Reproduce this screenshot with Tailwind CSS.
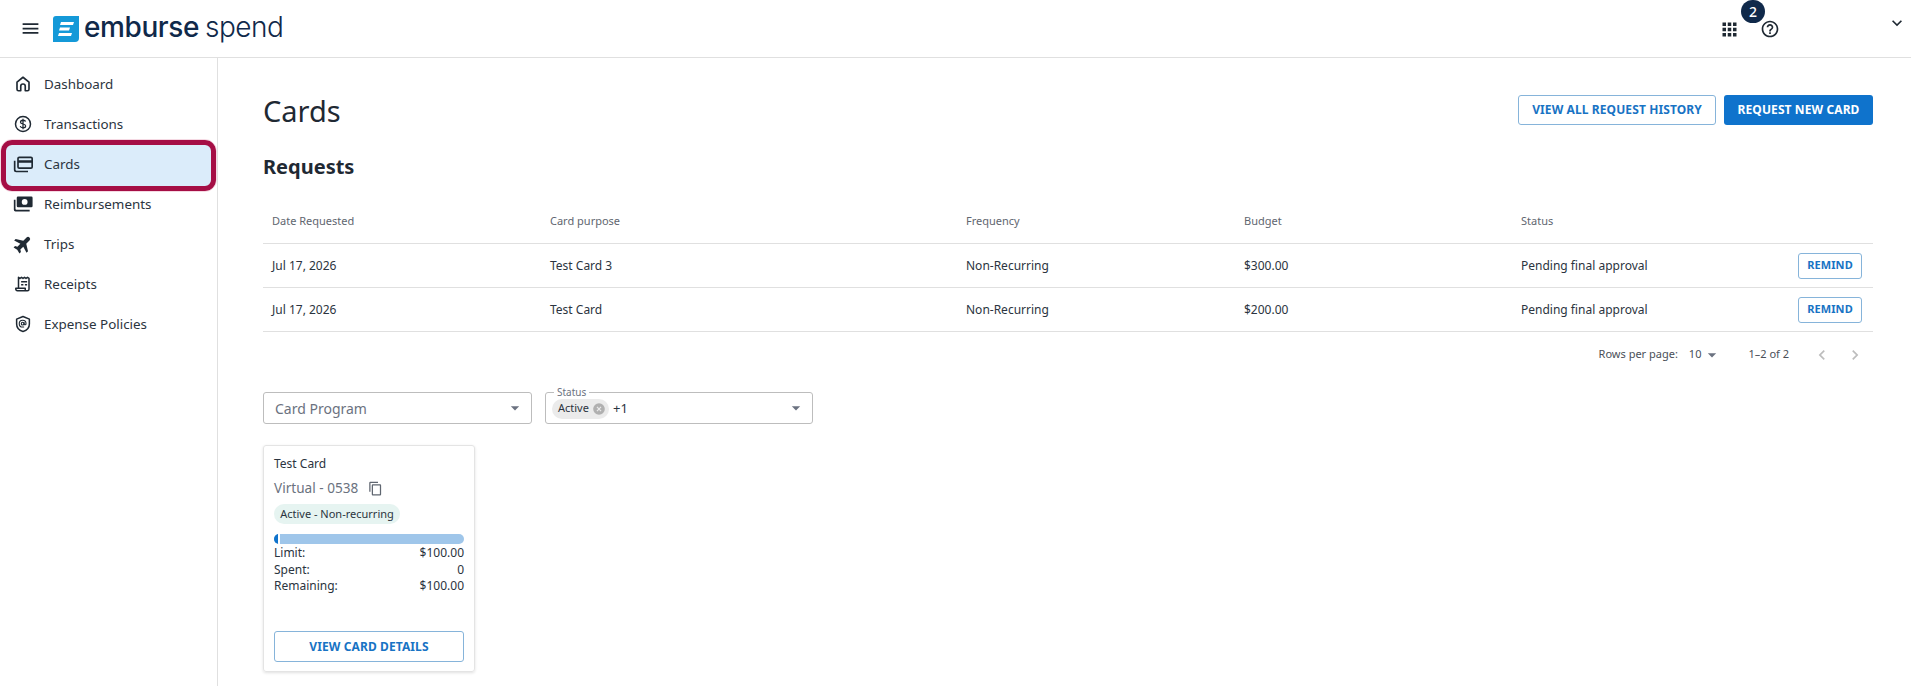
<!DOCTYPE html>
<html lang="en">
<head>
  <meta charset="UTF-8" />
  <title>Cards</title>
  <script src="https://cdn.jsdelivr.net/npm/@tailwindcss/browser@4"></script>
</head>
<body class="bg-white h-[686px] overflow-hidden font-['Noto_Sans',sans-serif] text-[#1f2933]">

  <!-- Top bar -->
  <header class="h-[58px] border-b border-[#e0e0e0] flex items-center relative">
    <button class="ml-[18px] w-6 h-6 flex items-center justify-center">
      <svg class="w-[21px] h-[21px]" viewBox="0 0 24 24" fill="#1f2933"><path d="M3 18h18v-2H3v2zm0-5h18v-2H3v2zm0-7v2h18V6H3z"/></svg>
    </button>
    <div class="ml-[11px] flex items-center">
      <svg class="w-[26px] h-[26px]" viewBox="0 0 26 26">
        <path d="M3 0H26V22a4 4 0 0 1-4 4H0V3a3 3 0 0 1 3-3z" fill="#1499d8"/>
        <path d="M8 6h13l-1 3H7zM7 11.500h10l-1 3H6zM6 17h13l-1 3H5z" fill="#fff"/>
      </svg>
      <span class="ml-[5px] text-[28px] leading-none font-['Inter',sans-serif] font-[450] text-[#10294a] tracking-[-0.4px] -mt-[3px]">emburse</span>
      <span class="ml-[6px] text-[28px] leading-none font-['Inter',sans-serif] font-light text-[#10294a] tracking-[-0.5px] -mt-[3px]">spend</span>
    </div>
    <div class="ml-auto flex items-center">
      <svg class="w-[21px] h-[21px] mr-[20px] mt-px" viewBox="0 0 24 24" fill="#1f2933"><path d="M4 8h4V4H4v4zm6 12h4v-4h-4v4zm-6 0h4v-4H4v4zm0-6h4v-4H4v4zm6 0h4v-4h-4v4zm6-10v4h4V4h-4zm-6 4h4V4h-4v4zm6 6h4v-4h-4v4zm0 6h4v-4h-4v4z"/></svg>
      <svg class="w-[20px] h-[20px] mr-[107px] mt-px" viewBox="0 0 24 24" fill="#1f2933"><path d="M11 18h2v-2h-2v2zm1-16C6.480 2 2 6.480 2 12s4.480 10 10 10 10-4.480 10-10S17.520 2 12 2zm0 18c-4.410 0-8-3.590-8-8s3.590-8 8-8 8 3.590 8 8-3.590 8-8 8zm0-14c-2.210 0-4 1.790-4 4h2c0-1.100.9-2 2-2s2 .9 2 2c0 2-3 1.750-3 5h2c0-2.250 3-2.500 3-5 0-2.210-1.790-4-4-4z"/></svg>
      <svg class="w-[20px] h-[20px] mr-[4px] -mt-[11px]" viewBox="0 0 24 24" fill="#1f2933"><path d="M7.410 8.590 12 13.170l4.590-4.580L18 10l-6 6-6-6z"/></svg>
    </div>
    <span class="absolute left-[1741px] top-0 w-6 h-[23px] rounded-full bg-[#10294a] text-white text-[14px] font-medium flex items-center justify-center">2</span>
  </header>

  <div class="flex h-[628px]">
    <!-- Sidebar -->
    <aside class="w-[218px] shrink-0 border-r border-[#e0e0e0] pt-[6px]">
      <nav class="text-[13.4px] text-[#2b3440]">
        <a class="h-10 flex items-center pl-[14px]">
          <svg class="w-[18px] h-[18px] mr-[12px]" viewBox="0 0 24 24" fill="none" stroke="#1f2933" stroke-width="2.200" stroke-linejoin="round"><path d="M12 3 4 9.500V19a2 2 0 0 0 2 2h3v-6a3 3 0 0 1 6 0v6h3a2 2 0 0 0 2-2V9.500z"/></svg>
          Dashboard
        </a>
        <a class="h-10 flex items-center pl-[14px]">
          <svg class="w-[18px] h-[18px] mr-[12px]" viewBox="0 0 24 24" fill="none" stroke="#1f2933" stroke-width="2"><circle cx="12" cy="12" r="10"/><path d="M15.500 8.800C15 7.500 13.700 7 12 7c-2 0-3.300 1-3.300 2.500 0 3.300 6.800 1.700 6.800 5 0 1.500-1.500 2.500-3.500 2.500-1.800 0-3.200-.7-3.700-2.200M12 5v14" stroke-width="1.700"/></svg>
          Transactions
        </a>
        <a class="h-10 flex items-center pl-[13px] relative">
          <span class="absolute left-[1px] top-[-1px] w-[215px] h-[51px] -mt-[3px] rounded-[11px] border-[5px] border-[#a50e45] bg-[#dbecfa] outline outline-[#e5a0b8]/40"></span>
          <svg class="w-[20px] h-[20px] mr-[11px] relative" viewBox="0 0 24 24" fill="none" stroke="#1f2933" stroke-width="2"><rect x="6" y="4" width="17" height="13" rx="1.500"/><path d="M6 9h17" stroke-width="3"/><path d="M2 8v11a2 2 0 0 0 2 2h14"/></svg>
          <span class="relative">Cards</span>
        </a>
        <a class="h-10 flex items-center pl-[13px]">
          <svg class="w-[20px] h-[20px] mr-[11px]" viewBox="0 0 24 24"><path fill="#1f2933" fill-rule="evenodd" d="M6 3h16a1.500 1.500 0 0 1 1.500 1.500v10A1.500 1.500 0 0 1 22 16H6a1.500 1.500 0 0 1-1.500-1.500v-10A1.500 1.500 0 0 1 6 3zm8 3a3.500 3.500 0 1 0 0 7 3.500 3.500 0 0 0 0-7z"/><path fill="#1f2933" d="M1 7h2v11a1 1 0 0 0 1 1h16v2H3a2 2 0 0 1-2-2z"/></svg>
          Reimbursements
        </a>
        <a class="h-10 flex items-center pl-[13px]">
          <svg class="w-[20px] h-[20px] mr-[11px]" viewBox="0 0 24 24" fill="#1f2933"><g transform="rotate(45 12 12)"><path d="M22 16.500v-2.500l-8-5V3.500a2.500 2.500 0 0 0-5 0V9l-8 5v2.500l8-2.500V19l-2.500 1.500V23l5-1.200 5 1.200v-2.500L14 19v-5z" transform="translate(.5 0)"/></g></svg>
          Trips
        </a>
        <a class="h-10 flex items-center pl-[14px]">
          <svg class="w-[18px] h-[18px] mr-[12px]" viewBox="0 0 24 24" fill="none" stroke="#1f2933" stroke-width="2"><path d="M6 17V3l2 1.500 2-1.500 2 1.500 2-1.500 2 1.500 2-1.500 2 1.500V19a2 2 0 0 1-2 2H5a2.500 2.500 0 0 1-2.500-3.500h12.500V21" stroke-linejoin="round"/><path d="M9.500 9h8M9.500 13h3M14.500 13h3"/></svg>
          Receipts
        </a>
        <a class="h-10 flex items-center pl-[14px]">
          <svg class="w-[18px] h-[18px] mr-[12px]" viewBox="0 0 24 24" fill="none" stroke="#1f2933" stroke-width="2" stroke-linejoin="round"><path d="M12 2 3.500 5.500v6.500c0 4.800 3.500 8.500 8.500 10 5-1.500 8.500-5.200 8.500-10V5.500z"/><circle cx="11.500" cy="11.500" r="1.800" stroke-width="1.500"/><path d="M13.500 9.500v2.500c0 1.500 2.500 1.300 2.500-.5a4.500 4.500 0 1 0-4.500 4.500h2" stroke-width="1.500"/></svg>
          Expense Policies
        </a>
      </nav>
    </aside>

    <!-- Main -->
    <main class="flex-1 pl-[45px] pr-[38px]">
      <div class="flex items-start justify-between pt-[37px] h-[91px]">
        <h1 class="text-[29px] leading-[40px] text-[#1f2933] -mt-[4px]">Cards</h1>
        <div class="flex gap-2">
          <button class="h-[30px] w-[198px] rounded-[3px] border border-[#86b4da] text-[#1873c4] text-[12px] font-bold tracking-[0.1px]">VIEW ALL REQUEST HISTORY</button>
          <button class="h-[30px] w-[149px] rounded-[3px] bg-[#0f73cc] text-white text-[12px] font-bold tracking-[0.1px]">REQUEST NEW CARD</button>
        </div>
      </div>
      <h2 class="text-[20px] leading-[28px] font-bold text-[#1f2933] mt-[4px]">Requests</h2>

      <!-- Requests table -->
      <div class="mt-[17px] text-[12px]">
        <div class="grid grid-cols-[278px_416px_278px_277px_1fr] h-[46px] items-center border-b border-[#e0e0e0] text-[11px] text-[#5f6670] pl-[9px] pt-px">
          <span>Date Requested</span><span>Card purpose</span><span>Frequency</span><span>Budget</span><span>Status</span>
        </div>
        <div class="grid grid-cols-[278px_416px_278px_277px_1fr] h-[44px] items-center border-b border-[#e0e0e0] pl-[9px] text-[#2b3440]">
          <span>Jul 17, 2026</span><span>Test Card 3</span><span>Non-Recurring</span><span>$300.00</span>
          <span class="flex items-center justify-between pr-[11px]">Pending final approval
            <button class="h-[26px] w-[64px] rounded-[3px] border border-[#86b4da] text-[#1873c4] text-[11px] font-bold tracking-[0.1px]">REMIND</button>
          </span>
        </div>
        <div class="grid grid-cols-[278px_416px_278px_277px_1fr] h-[44px] items-center border-b border-[#e0e0e0] pl-[9px] text-[#2b3440]">
          <span>Jul 17, 2026</span><span>Test Card</span><span>Non-Recurring</span><span>$200.00</span>
          <span class="flex items-center justify-between pr-[11px]">Pending final approval
            <button class="h-[26px] w-[64px] rounded-[3px] border border-[#86b4da] text-[#1873c4] text-[11px] font-bold tracking-[0.1px]">REMIND</button>
          </span>
        </div>
        <div class="h-[45px] flex items-center justify-end text-[11px] text-[#4a5058]">
          <span>Rows per page:</span>
          <span class="ml-[11px]">10</span>
          <svg class="w-[20px] h-[20px] ml-px" viewBox="0 0 24 24" fill="#6b7280"><path d="M7 10l5 5 5-5z"/></svg>
          <span class="ml-[26px]">1–2 of 2</span>
          <svg class="w-[20px] h-[20px] ml-[23px]" viewBox="0 0 24 24" fill="#bdbdbd"><path d="M15.410 7.410 14 6l-6 6 6 6 1.410-1.410L10.830 12z"/></svg>
          <svg class="w-[20px] h-[20px] ml-[13px] mr-[8px]" viewBox="0 0 24 24" fill="#bdbdbd"><path d="M10 6 8.590 7.410 13.170 12l-4.580 4.590L10 18l6-6z"/></svg>
        </div>
      </div>

      <!-- Filters -->
      <div class="flex gap-[13px] mt-[15px]">
        <div class="w-[269px] h-[32px] rounded-[3px] border border-[#bdbdbd] flex items-center justify-between pl-[11px] pr-[6px] text-[14px] text-[#6b7280]">
          Card Program
          <svg class="w-[20px] h-[20px]" viewBox="0 0 24 24" fill="#6b7280"><path d="M7 10l5 5 5-5z"/></svg>
        </div>
        <div class="relative w-[268px] h-[32px] rounded-[3px] border border-[#bdbdbd] flex items-center justify-between pl-[6px] pr-[6px]">
          <span class="absolute left-[8px] -top-[7px] bg-white px-[3px] text-[10px] leading-[12px] text-[#6b7280]">Status</span>
          <span class="flex items-center text-[12px] text-[#2b3440] mt-px">
            <span class="h-[20px] w-[57px] rounded-full bg-[#ebebeb] flex items-center pl-[6px] text-[11px]">Active
              <svg class="w-[14px] h-[14px] ml-[3px]" viewBox="0 0 24 24"><circle cx="12" cy="12" r="10" fill="#b0b0b0"/><path d="M8.500 8.500l7 7m0-7-7 7" stroke="#ebebeb" stroke-width="2"/></svg>
            </span>
            <span class="ml-[4px] text-[13px]">+1</span>
          </span>
          <svg class="w-[20px] h-[20px]" viewBox="0 0 24 24" fill="#6b7280"><path d="M7 10l5 5 5-5z"/></svg>
        </div>
      </div>

      <!-- Card -->
      <div class="mt-[21px] w-[212px] h-[227px] rounded-[3px] border border-[#e4e4e4] shadow-[0_1px_3px_rgba(0,0,0,0.12)] px-[10px] flex flex-col">
        <div class="mt-[10px] text-[12px] leading-[16px] text-[#2b3440]">Test Card</div>
        <div class="mt-[6px] flex items-center text-[13.6px] leading-[20px] text-[#6b7280]">Virtual - 0538
          <svg class="w-[15px] h-[15px] ml-[10px]" viewBox="0 0 24 24" fill="#5f6670"><path d="M16 1H4c-1.100 0-2 .9-2 2v14h2V3h12V1zm3 4H8c-1.100 0-2 .9-2 2v14c0 1.100.9 2 2 2h11c1.100 0 2-.9 2-2V7c0-1.100-.9-2-2-2zm0 16H8V7h11v14z"/></svg>
        </div>
        <div class="mt-[6px] w-[126px] h-[20px] rounded-full bg-[#e6f4f1] flex items-center justify-center text-[11px] text-[#2b3440]">Active - Non-recurring</div>
        <div class="mt-[10px] h-[10px] rounded-full bg-[#9fc6ea] overflow-hidden flex">
          <div class="w-[4px] h-full bg-[#0f73cc]"></div>
          <div class="w-[2px] h-full bg-white"></div>
        </div>
        <div class="mt-[1px] text-[12px] text-[#2b3440] leading-[16px]">
          <div class="flex justify-between h-[17px]"><span>Limit:</span><span>$100.00</span></div>
          <div class="flex justify-between h-[16px]"><span>Spent:</span><span>0</span></div>
          <div class="flex justify-between h-[16px]"><span>Remaining:</span><span>$100.00</span></div>
        </div>
        <button class="mt-auto mb-[9px] h-[31px] rounded-[3px] border border-[#86b4da] text-[#1873c4] text-[12px] font-bold tracking-[0.1px]">VIEW CARD DETAILS</button>
      </div>
    </main>
  </div>
</body>
</html>
